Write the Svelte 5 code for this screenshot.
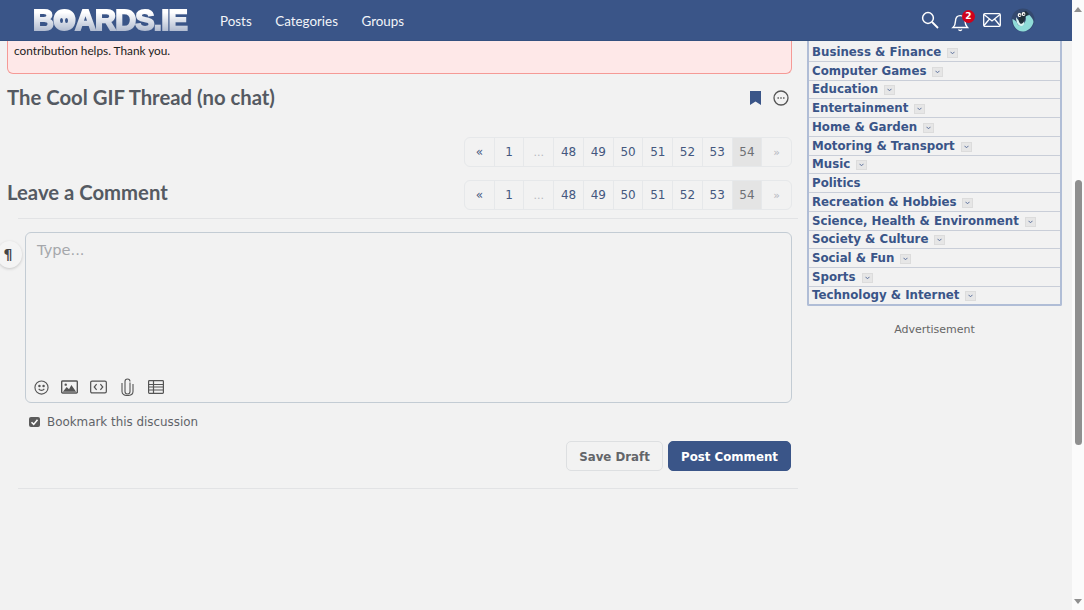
<script>
  const navLinks = ["Posts", "Categories", "Groups"];
  const pages = ["«", "1", "...", "48", "49", "50", "51", "52", "53", "54", "»"];
  const categories = [
    { name: "Business & Finance", menu: true },
    { name: "Computer Games", menu: true },
    { name: "Education", menu: true },
    { name: "Entertainment", menu: true },
    { name: "Home & Garden", menu: true },
    { name: "Motoring & Transport", menu: true },
    { name: "Music", menu: true },
    { name: "Politics", menu: false },
    { name: "Recreation & Hobbies", menu: true },
    { name: "Science, Health & Environment", menu: true },
    { name: "Society & Culture", menu: true },
    { name: "Social & Fun", menu: true },
    { name: "Sports", menu: true },
    { name: "Technology & Internet", menu: true }
  ];
</script>

{#snippet pager()}
  <div class="pager">
    {#each pages as p, i}
      <span class="page" class:current={p == "54"} class:muted={p == "..." || p == "»"} class:first={i == 0} class:last={i == pages.length - 1}>{p}</span>
    {/each}
  </div>
{/snippet}

<div class="window">
  <div class="viewport">
    <header>
      <div class="logo">BOARDS.IE<i class="face"><i class="eye"></i><i class="eye"></i></i></div>
      <nav>
        {#each navLinks as link}
          <span>{link}</span>
        {/each}
      </nav>
      <div class="tools">
        <svg width="18" height="18" viewBox="0 0 18 18" fill="none" stroke="#fff" stroke-width="1.5">
          <circle cx="7" cy="7" r="5.4" />
          <path d="M11 11l6 6" stroke-width="1.8" />
        </svg>
        <div class="bell">
          <svg width="20" height="22" viewBox="0 0 20 22" fill="none" stroke="#fff" stroke-width="1.4">
            <path d="M2 17.5c2-1.8 2.400-3.400 2.500-6.500.1-3.200 2-5.400 4.700-5.400s4.600 2.200 4.800 5.400c.1 3.100.6 4.700 2.500 6.500z" />
            <path d="M7.500 19.500c.8 1.300 2.600 1.300 3.400 0" />
          </svg>
          <b>2</b>
        </div>
        <svg width="18" height="14" viewBox="0 0 18 14" fill="none" stroke="#fff" stroke-width="1.3">
          <rect x=".7" y=".7" width="16.600" height="12.600" rx="1.200" />
          <path d="M1 1.500l8 6.500 8-6.500M1 12.500l5.500-6.500M17 12.500l-5.500-6.500" />
        </svg>
        <svg class="avatar" width="24" height="24" viewBox="0 0 24 24">
          <circle cx="12" cy="12" r="11.500" fill="#34496f" />
          <path d="M1.500 11c2 1 4 2 5 5 1 2 4 2 6 0 2-2 3-5 2-8l4-1c2 2 4 5 4 7-1 5-5 9-10 9.500-6 .5-11-5-11-12.500z" fill="#8fdcd8" />
          <path d="M5 9c2 3 4 6 8 4 1 3-1 5-3 5-3 0-5-4-5-9z" fill="#d8f4f2" />
          <path d="M6 6l9-3 3 3-4 3c0 3-1 6-4 7-2-1-3-4-2-7z" fill="#20303a" />
          <circle cx="8.500" cy="7" r="1.900" fill="#fff" />
          <circle cx="12.500" cy="6" r="1.900" fill="#fff" />
          <circle cx="8.800" cy="7.200" r=".8" fill="#111" />
          <circle cx="12.800" cy="6.200" r=".8" fill="#111" />
        </svg>
      </div>
    </header>

    <div class="content">
      <main>
        <div class="alert">contribution helps. Thank you.</div>

        <div class="title-row">
          <h1>The Cool GIF Thread (no chat)</h1>
          <div class="title-icons">
            <svg width="11" height="14" viewBox="0 0 11 14"><path d="M0 0h11v14l-5.500-3.500L0 14z" fill="#3a5588" /></svg>
            <svg width="16" height="16" viewBox="0 0 16 16" fill="none" stroke="#555" stroke-width="1.300">
              <circle cx="8" cy="8" r="7" />
              <path d="M4.500 8h1.400M7.300 8h1.400M10.100 8h1.400" stroke-width="1.700" />
            </svg>
          </div>
        </div>

        <div class="pager-row">
          {@render pager()}
        </div>

        <div class="comment-head">
          <h2>Leave a Comment</h2>
          {@render pager()}
        </div>

        <section class="comment">
          <div class="editor-wrap">
            <span class="para">¶</span>
            <div class="editor">
              <div class="placeholder">Type...</div>
              <div class="editor-icons">
                <svg width="15" height="15" viewBox="0 0 16 16" fill="none" stroke="#555" stroke-width="1.200">
                  <circle cx="8" cy="8" r="7" />
                  <path d="M5 9.500c1.500 2 4.500 2 6 0" />
                  <circle cx="5.800" cy="6.300" r=".7" fill="#555" />
                  <circle cx="10.200" cy="6.300" r=".7" fill="#555" />
                </svg>
                <svg width="17" height="14" viewBox="0 0 18 14" fill="none" stroke="#555" stroke-width="1.500">
                  <rect x=".7" y=".7" width="16.600" height="12.600" rx="1" />
                  <path d="M2 12l4-5 2.500 2.500L11 5l5 7z" fill="#555" stroke="none" />
                  <circle cx="5" cy="4.500" r="1.300" fill="#555" stroke="none" />
                </svg>
                <svg width="17" height="14" viewBox="0 0 18 14" fill="none" stroke="#555" stroke-width="1.300">
                  <rect x=".7" y=".7" width="16.600" height="12.600" rx="1.500" />
                  <path d="M7 4L4.500 7 7 10M11 4l2.500 3L11 10" />
                </svg>
                <svg width="13" height="18" viewBox="0 0 13 18" fill="none" stroke="#555" stroke-width="1.100">
                  <path d="M9 4.500v9c0 1.500-1 2.500-2.500 2.500S4 15 4 13.500V3.500C4 2 5 1 6.500 1S9 2 9 3.500M12 6v7.500c0 2.500-2.300 4-5.500 4S1 16 1 13.500V5" />
                </svg>
                <svg width="16" height="14" viewBox="0 0 16 14" fill="none" stroke="#555" stroke-width="1.200">
                  <rect x=".6" y=".6" width="14.800" height="12.800" rx=".8" />
                  <path d="M.6 4.500h14.800M.6 7h14.800M.6 10h14.800M5.500 .6v12.800" />
                </svg>
              </div>
            </div>
          </div>

          <label class="bookmark">
            <span class="check">
              <svg width="11" height="10" viewBox="0 0 11 10" fill="none" stroke="#fff" stroke-width="1.600"><path d="M2.500 5.200l2.200 2.200L8.500 2.800" /></svg>
            </span>
            Bookmark this discussion
          </label>

          <div class="actions">
            <button class="draft">Save Draft</button>
            <button class="post">Post Comment</button>
          </div>
        </section>
      </main>

      <aside>
        <ul>
          {#each categories as cat}
            <li>
              <span>{cat.name}</span>
              {#if cat.menu}
                <em><svg width="5" height="4" viewBox="0 0 5 4" fill="none" stroke="#5a6f9c" stroke-width="1"><path d="M.5 .8l2 2 2-2" /></svg></em>
              {/if}
            </li>
          {/each}
        </ul>
        <div class="ad">Advertisement</div>
      </aside>
    </div>
  </div>

  <div class="scrollbar">
    <i class="arrow up"></i>
    <div class="track"><div class="thumb"></div></div>
    <i class="arrow down"></i>
  </div>
</div>

<style>
  :global(body) {
    margin: 0;
    overflow: hidden;
    background: #f2f2f2;
  }

  .window {
    display: flex;
    width: 1084px;
    height: 610px;
    overflow: hidden;
    font-family: "DejaVu Sans", sans-serif;
    color: #555a62;
  }

  .viewport {
    width: 1072px;
    flex: none;
    background: #f2f2f2;
  }

  header {
    display: flex;
    align-items: center;
    height: 41px;
    padding: 0 37px 0 33px;
    box-sizing: border-box;
    background: #3a5588;
    border-bottom: 1px solid #34507f;
  }

  .logo {
    position: relative;
    width: 155px;
    font-family: "Liberation Sans", sans-serif;
    font-weight: 700;
    font-size: 29px;
    line-height: 30px;
    letter-spacing: -0.8px;
    white-space: nowrap;
    color: #fff;
    -webkit-text-stroke: 1.8px #fff;
    mask-image: linear-gradient(#000 25%, rgba(0, 0, 0, 0.62) 85%);
    -webkit-mask-image: linear-gradient(#000 25%, rgba(0, 0, 0, 0.62) 85%);
  }

  .face {
    position: absolute;
    top: 8px;
    left: 24px;
    display: flex;
    justify-content: center;
    gap: 2px;
    align-items: center;
    width: 13px;
    height: 14px;
    background: #fff;
  }

  .eye {
    width: 3px;
    height: 5px;
    border-radius: 50%;
    background: #3a5588;
  }

  nav {
    display: flex;
    gap: 23.500px;
    margin: 1px 0 0 32px;
    font-family: Lato, sans-serif;
    font-size: 13.400px;
    color: #f2f4f8;
  }

  .tools {
    display: flex;
    align-items: center;
    gap: 12px;
    margin-left: auto;
  }

  .bell {
    position: relative;
    display: flex;
    margin-top: 2px;
  }

  .bell b {
    position: absolute;
    top: 0;
    left: 11px;
    width: 13px;
    height: 13px;
    border-radius: 50%;
    background: #d0021b;
    color: #fff;
    font-size: 9px;
    line-height: 13px;
    text-align: center;
  }

  .avatar {
    margin-left: -2px;
  }

  .content {
    display: flex;
    align-items: flex-start;
  }

  main {
    width: 792px;
    margin-left: 7px;
    flex: none;
  }

  .alert {
    height: 33px;
    padding: 2px 6px 0;
    box-sizing: border-box;
    background: #fee8e8;
    border: 1px solid #f59a96;
    border-top: 0;
    border-radius: 0 0 6px 6px;
    margin-right: 7px;
    font-family: Lato, sans-serif;
    font-size: 11.800px;
    line-height: 15px;
    color: #222;
  }

  .title-row {
    display: flex;
    align-items: center;
    justify-content: space-between;
    height: 30px;
    margin-top: 8px;
    padding-right: 10px;
  }

  h1, h2 {
    margin: 0;
    font-family: Lato, sans-serif;
    font-weight: 700;
    font-size: 20.300px;
    color: #555a62;
  }

  h2 {
    line-height: 24px;
    margin-bottom: 6px;
  }

  .title-icons {
    display: flex;
    align-items: center;
    gap: 12px;
    padding-top: 2px;
  }

  .title-icons svg {
    display: block;
  }

  .pager-row {
    display: flex;
    justify-content: flex-end;
    margin-top: 25px;
    padding-right: 7px;
  }

  .comment-head {
    display: flex;
    align-items: center;
    justify-content: space-between;
    margin-top: 13px;
    padding-right: 7px;
  }

  .pager {
    display: flex;
    height: 30px;
    border: 1px solid #e6e8ea;
    box-sizing: border-box;
    border-radius: 6px;
    width: 328px;
  }

  .page {
    flex: 1;
    text-align: center;
    font-size: 12px;
    line-height: 29px;
    color: #44587f;
    border-left: 1px solid #e6e8ea;
  }

  .page.first {
    border-left: 0;
  }

  .page.muted {
    color: #b5b8c0;
    font-size: 11px;
  }

  .page.current {
    background: #e4e4e4;
    color: #6e7074;
  }

  .comment {
    margin: 8px 0 0 11px;
    width: 780px;
    padding-bottom: 17px;
    border-top: 1px solid #e2e3e5;
    border-bottom: 1px solid #e2e3e5;
  }

  .editor-wrap {
    display: flex;
    margin-top: 13px;
    padding-left: 7px;
  }

  .para {
    position: absolute;
    left: -3px;
    top: 241px;
    width: 25px;
    height: 27px;
    border-radius: 50%;
    background: #f4f4f4;
    box-shadow: 0 1px 3px rgba(0, 0, 0, 0.18);
    text-align: center;
    text-indent: -3px;
    font-size: 14px;
    line-height: 26px;
    color: #444;
    font-weight: 700;
  }

  .editor {
    display: flex;
    flex-direction: column;
    justify-content: space-between;
    width: 767px;
    height: 171px;
    box-sizing: border-box;
    border: 1px solid #c3ccd4;
    border-radius: 6px;
    padding: 8px 8px 6px 11px;
  }

  .placeholder {
    font-size: 14.600px;
    line-height: 18px;
    color: #a5a7ab;
  }

  .editor-icons {
    display: flex;
    align-items: center;
    margin-left: -3px;
  }

  .editor-icons svg {
    display: block;
    margin-right: 12px;
  }

  .editor-icons svg:nth-child(3),
  .editor-icons svg:nth-child(4) {
    margin-right: 14px;
  }

  .bookmark {
    display: flex;
    align-items: center;
    gap: 7px;
    margin: 11px 0 0 11px;
    font-size: 11.900px;
    line-height: 16px;
    color: #5f6368;
  }

  .check {
    display: flex;
    width: 11px;
    height: 10px;
    margin-top: -1px;
    border-radius: 2px;
    background: #5c5c5c;
  }

  .actions {
    display: flex;
    justify-content: flex-end;
    gap: 5px;
    margin-top: 11px;
    padding-right: 7px;
  }

  button {
    height: 30px;
    padding: 1px 0 0;
    box-sizing: border-box;
    border-radius: 5px;
    font-family: "DejaVu Sans", sans-serif;
    font-weight: 700;
    font-size: 11.800px;
  }

  .draft {
    width: 97px;
    background: #f2f2f2;
    border: 1px solid #dddfe1;
    color: #636569;
  }

  .post {
    width: 123px;
    background: #3a5588;
    border: 1px solid #3a5588;
    color: #fff;
  }

  aside {
    width: 255px;
    margin-left: 8px;
    flex: none;
  }

  ul {
    margin: 0;
    padding: 2px 0 0;
    list-style: none;
    border: 1px solid #b0bdd6;
    border-width: 0 2px 2px;
    border-radius: 0 0 2px 2px;
  }

  li {
    display: flex;
    align-items: center;
    gap: 6px;
    height: 18.750px;
    box-sizing: border-box;
    padding-left: 3px;
    border-bottom: 1px solid #c9ced8;
    font-weight: 700;
    font-size: 11.800px;
    color: #3a5588;
  }

  li:last-child {
    height: 17px;
    border-bottom: 0;
  }

  li em {
    display: flex;
    align-items: center;
    justify-content: center;
    width: 11px;
    height: 10px;
    margin-top: 2px;
    box-sizing: border-box;
    background: #e6e6e6;
    border: 1px solid #dcdcdc;
  }

  .ad {
    margin-top: 16px;
    text-align: center;
    font-size: 11px;
    line-height: 15px;
    color: #666;
  }

  .scrollbar {
    display: flex;
    flex-direction: column;
    align-items: center;
    width: 12px;
    flex: none;
    background: #fbfbfb;
  }

  .track {
    flex: 1;
    width: 100%;
  }

  .thumb {
    width: 7px;
    height: 265px;
    margin: 168px auto 0;
    border-radius: 4px;
    background: #8f8f8f;
  }

  .arrow {
    width: 0;
    height: 0;
    border-left: 4px solid transparent;
    border-right: 4px solid transparent;
  }

  .arrow.up {
    margin-top: 7px;
    border-bottom: 5px solid #8f8f8f;
  }

  .arrow.down {
    margin-bottom: 6px;
    border-top: 5px solid #8f8f8f;
  }
</style>
